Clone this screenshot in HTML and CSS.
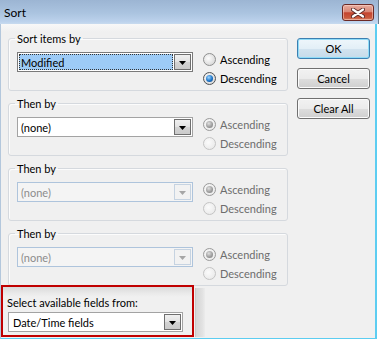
FILE: index.html
```html
<!DOCTYPE html>
<html lang="en">
<head>
    <meta charset="UTF-8">
    <title>Sort</title>
    <link rel="stylesheet" href="styles.css">
</head>
<body>
    <div class="window">
        <div class="titlebar">
            <span class="title">Sort</span>
            <span class="close-btn">
                <svg width="14" height="10" viewBox="0 0 14 10">
                    <path d="M2 1.5L12 8.5M12 1.5L2 8.5" stroke="#5a2a28" stroke-width="4" stroke-linecap="round"/>
                    <path d="M2 1.5L12 8.5M12 1.5L2 8.5" stroke="#fff" stroke-width="2.2" stroke-linecap="round"/>
                </svg>
            </span>
        </div>

        <div class="client">
            <div class="main">
                <div class="groups">
                    <!-- first sort key -->
                    <fieldset class="group">
                        <legend>Sort items by</legend>
                        <div class="row">
                            <div class="combo focus">
                                <span class="combo-text">Modified</span>
                                <span class="combo-btn"><svg width="7" height="4"><path d="M0 0h7L3.5 4z"/></svg></span>
                            </div>
                            <div class="radios">
                                <div class="radio"><span class="dot"></span>Ascending</div>
                                <div class="radio checked"><span class="dot"></span>Descending</div>
                            </div>
                        </div>
                    </fieldset>

                    <fieldset class="group">
                        <legend>Then by</legend>
                        <div class="row">
                            <div class="combo">
                                <span class="combo-text">(none)</span>
                                <span class="combo-btn"><svg width="7" height="4"><path d="M0 0h7L3.5 4z"/></svg></span>
                            </div>
                            <div class="radios disabled">
                                <div class="radio checked"><span class="dot"></span>Ascending</div>
                                <div class="radio"><span class="dot"></span>Descending</div>
                            </div>
                        </div>
                    </fieldset>

                    <fieldset class="group">
                        <legend>Then by</legend>
                        <div class="row">
                            <div class="combo disabled">
                                <span class="combo-text">(none)</span>
                                <span class="combo-btn"><svg width="7" height="4"><path d="M0 0h7L3.5 4z"/></svg></span>
                            </div>
                            <div class="radios disabled">
                                <div class="radio checked"><span class="dot"></span>Ascending</div>
                                <div class="radio"><span class="dot"></span>Descending</div>
                            </div>
                        </div>
                    </fieldset>

                    <fieldset class="group">
                        <legend>Then by</legend>
                        <div class="row">
                            <div class="combo disabled">
                                <span class="combo-text">(none)</span>
                                <span class="combo-btn"><svg width="7" height="4"><path d="M0 0h7L3.5 4z"/></svg></span>
                            </div>
                            <div class="radios disabled">
                                <div class="radio checked"><span class="dot"></span>Ascending</div>
                                <div class="radio"><span class="dot"></span>Descending</div>
                            </div>
                        </div>
                    </fieldset>
                </div>

                <div class="buttons">
                    <button class="btn default">OK</button>
                    <button class="btn">Cancel</button>
                    <button class="btn">Clear All</button>
                </div>
            </div>

            <div class="bottom">
                <div class="fields-panel">
                    <div class="fields-label">Select available fields from:</div>
                    <div class="combo wide">
                        <span class="combo-text">Date/Time fields</span>
                        <span class="combo-btn"><svg width="7" height="4"><path d="M0 0h7L3.5 4z"/></svg></span>
                    </div>
                </div>
                <div class="splitter"></div>
            </div>
        </div>
    </div>
</body>
</html>
```

FILE: styles.css
```css
* {
    box-sizing: border-box;
}
body {
    margin: 0;
    font-family: Lato, "Liberation Sans", sans-serif;
    font-size: 11px;
    color: #000;
    background: #fff;
}
.window {
    width: 379px;
    height: 340px;
    display: flex;
    flex-direction: column;
}
.titlebar {
    height: 24px;
    flex: none;
    display: flex;
    align-items: center;
    justify-content: space-between;
    padding: 0 4px 0 4px;
    background: linear-gradient(#9cb5d3, #abc4e0 55%, #bcd2ec 90%, #c8dbef);
    border-right: 1px solid #6a7b8c;
}
.title {
    font-size: 12px;
    padding-top: 1px;
}
.close-btn {
    width: 32px;
    height: 17px;
    margin-top: 1px;
    border: 1px solid #6b2a26;
    border-radius: 3px;
    background: linear-gradient(#e8ad9f, #d98877 45%, #c4442f 52%, #c95a3e 85%, #d9866a);
    box-shadow: inset 0 0 0 1px rgba(255, 220, 210, 0.5);
    display: flex;
    align-items: center;
    justify-content: center;
}
.client {
    flex: 1;
    margin-right: 2px;
    margin-bottom: 1px;
    background: linear-gradient(#f8f8f8, #f0f0f0 8px);
    border-left: 1px solid #b3c7dc;
    border-right: 2px solid #5ccdf1;
    border-bottom: 1px solid #5ccdf1;
    display: flex;
    flex-direction: column;
}
.main {
    display: flex;
    gap: 9px;
}
.groups {
    margin-left: 7px;
    padding-top: 8px;
    display: flex;
    flex-direction: column;
    gap: 6px;
}
.group {
    width: 280px;
    margin: 0;
    border: 1px solid #d5d9de;
    border-radius: 3px;
    box-shadow: inset 1px 1px 0 #fcfcfc;
    padding: 7px 8px 4px;
}
.group legend {
    padding: 0 2px;
    margin-left: -2px;
    line-height: 13px;
}
.row {
    display: flex;
    gap: 10px;
}
.combo {
    width: 176px;
    height: 20px;
    border: 1px solid #a3a3a3;
    background: #fff;
    padding: 1px;
    display: flex;
}
.combo-text {
    flex: 1;
    display: flex;
    align-items: center;
    padding-left: 2px;
}
.combo.focus {
    border-color: #7a7a7a;
}
.combo.focus .combo-text {
    background: #9dcbf6;
    outline: 1px dotted #333;
    outline-offset: -1px;
    padding-left: 2px;
    margin-right: 1px;
}
.combo-btn {
    width: 17px;
    border: 1px solid #6f6f6f;
    background: linear-gradient(#f0f0f0, #e2e2e2 50%, #d3d3d3 51%, #cbcbcb);
    display: flex;
    align-items: center;
    justify-content: center;
}
.combo-btn svg {
    fill: #000;
    margin-top: 1px;
}
.combo.disabled {
    border-color: #aec4dc;
    background: #f4f4f4;
    color: #8c8c8c;
}
.combo.disabled .combo-btn {
    border-color: #c6d3e1;
    background: #f2f2f2;
}
.combo.disabled .combo-btn svg {
    fill: #a6a6a6;
}
.radios {
    display: flex;
    flex-direction: column;
    gap: 4px;
}
.radio {
    height: 15px;
    display: flex;
    align-items: center;
    gap: 4px;
}
.dot {
    width: 13px;
    height: 13px;
    border-radius: 50%;
    border: 1px solid #8e8f8f;
    background: radial-gradient(circle at 40% 40%, #fdfdfd, #dcdcdc 70%, #cfcfcf);
    display: flex;
    align-items: center;
    justify-content: center;
}
.radio.checked .dot {
    border-color: #4f5254;
}
.radio.checked .dot::after {
    content: "";
    width: 7px;
    height: 7px;
    border-radius: 50%;
    background: radial-gradient(circle at 40% 35%, #9fd6ff, #1c74c8 55%, #0d3f7a);
}
.radios.disabled .radio {
    color: #6d6d6d;
}
.radios.disabled .dot {
    border-color: #c4c4c4;
    background: radial-gradient(circle at 40% 40%, #fbfbfb, #ececec 70%, #e4e4e4);
}
.radios.disabled .radio.checked .dot {
    border-color: #9a9a9a;
}
.radios.disabled .radio.checked .dot::after {
    background: radial-gradient(circle at 40% 35%, #e0e0e0, #9a9a9a 60%, #7c7c7c);
}
.buttons {
    padding-top: 14px;
    display: flex;
    flex-direction: column;
    gap: 9px;
}
.btn {
    width: 73px;
    height: 21px;
    padding: 0;
    font-family: inherit;
    font-size: 11px;
    color: #000;
    border: 1px solid #707070;
    border-radius: 3px;
    background: linear-gradient(#f2f2f2, #ebebeb 50%, #dddddd 51%, #cfcfcf);
    box-shadow: inset 0 0 0 1px #fbfbfb;
}
.btn.default {
    border-color: #3c7fb1;
    box-shadow: inset 0 0 0 1px #8fdcf8;
    background: linear-gradient(#eef6fb, #e3eff7 50%, #d2e3ef 51%, #c6dbea);
}
.bottom {
    display: flex;
    margin-top: -1px;
}
.fields-panel {
    width: 193px;
    height: 52px;
    border: 2px solid #c00000;
    background: linear-gradient(#dadada, #ebebeb 7px, #f0f0f0 10px);
    padding: 9px 4px 3px;
}
.fields-label {
    line-height: 13px;
    margin-bottom: 3px;
}
.combo.wide {
    width: 175px;
    margin-left: 1px;
}
.combo.wide .combo-text {
    padding-left: 3px;
}
.splitter {
    width: 10px;
    margin-left: 1px;
    margin-top: 3px;
    border-left: 1px solid #c9c9c9;
    background: linear-gradient(90deg, #d6d6d6, #dcdcdc 40%, #e2e2e2 70%, #ececec);
}
```
